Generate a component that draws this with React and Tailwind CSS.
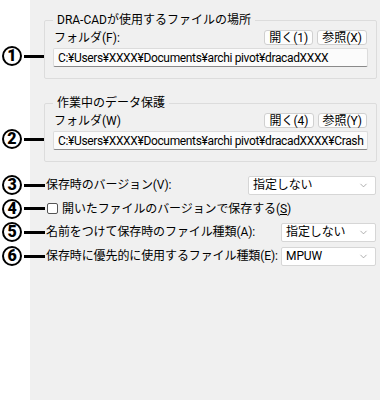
import React from 'react';
import { ChevronDown } from 'lucide-react';

const font = { fontFamily: 'Roboto, "Noto Sans CJK JP", sans-serif' };

// circled number + leader line
const Callout = ({ n }) => (
  <div className="flex items-center shrink-0 pl-[2px]">
    <span className="w-[20px] h-[20px] rounded-full border-2 border-black flex items-center justify-center text-[16px] font-black leading-none text-black">
      {n}
    </span>
    <span className="ml-[2px] w-[21px] h-[3px] bg-black" />
  </div>
);

const WinButton = ({ children }) => (
  <button className="h-[15px] px-[4px] flex items-center text-[12px] leading-none bg-[#fdfdfd] border border-[#d0d0d0] rounded-[3px]">
    {children}
  </button>
);

const PathInput = ({ value }) => (
  <div className="h-[19px] mt-[3px] flex items-center pl-[4px] bg-[#fbfbfb] border border-[#dcdcdc] border-b-[#8a8a8a] rounded-[2px] overflow-hidden whitespace-nowrap tracking-[-0.35px]">
    {value}
  </div>
);

const Select = ({ value, width }) => (
  <div className={`h-[19px] ${width} flex items-center justify-between pl-[4px] pr-[6px] bg-white border border-[#d6d6d6] rounded-[2px]`}>
    <span>{value}</span>
    <ChevronDown size={11} strokeWidth={1.5} className="text-[#8a8a8a]" />
  </div>
);

const FolderGroup = ({ n, title, label, open, browse, path, className }) => (
  <div className={`flex ${className}`}>
    <div className="w-[44px] shrink-0 flex flex-col justify-end pb-[13px]">
      <Callout n={n} />
    </div>
    <fieldset className="flex-1 min-w-0 mr-[3px] border border-[#dcdcdc] rounded-[2px] px-[8px] pb-[11px]">
      <legend className="px-[4px] leading-[14px]">{title}</legend>
      <div className="flex items-end justify-between mt-[3px] pl-[1px] pr-[1px]">
        <span className="leading-[14px]">{label}</span>
        <div className="flex gap-[4px]">
          <WinButton>{open}</WinButton>
          <WinButton>{browse}</WinButton>
        </div>
      </div>
      <PathInput value={path} />
    </fieldset>
  </div>
);

export default function App() {
  return (
    <div
      className="w-[380px] h-[400px] text-[12px] leading-[14px] text-black bg-[linear-gradient(to_right,#ffffff_30px,#f0f0f0_30px)] pt-[13px]"
      style={font}
    >
      <FolderGroup
        n="1"
        title="DRA-CADが使用するファイルの場所"
        label="フォルダ(F):"
        open="開く(1)"
        browse="参照(X)"
        path="C:¥Users¥XXXX¥Documents¥archi pivot¥dracadXXXX"
      />
      <FolderGroup
        n="2"
        className="mt-[17px]"
        title="作業中のデータ保護"
        label="フォルダ(W)"
        open="開く(4)"
        browse="参照(Y)"
        path="C:¥Users¥XXXX¥Documents¥archi pivot¥dracadXXXX¥Crash"
      />

      <div className="flex flex-col gap-[4px] mt-[13px] pr-[4px] tracking-[-0.1px]">
        <div className="flex items-center">
          <Callout n="3" />
          <span className="ml-[1px]">保存時のバージョン(V):</span>
          <div className="ml-auto">
            <Select value="指定しない" width="w-[128px]" />
          </div>
        </div>
        <div className="flex items-center h-[19px]">
          <Callout n="4" />
          <span className="ml-[2px] w-[11px] h-[11px] border border-[#555] rounded-[2px] bg-white" />
          <span className="ml-[4px]">
            開いたファイルのバージョンで保存する(<span className="underline">S</span>)
          </span>
        </div>
        <div className="flex items-center">
          <Callout n="5" />
          <span className="ml-[1px]">名前をつけて保存時のファイル種類(A):</span>
          <div className="ml-auto">
            <Select value="指定しない" width="w-[95px]" />
          </div>
        </div>
        <div className="flex items-center">
          <Callout n="6" />
          <span className="ml-[1px]">保存時に優先的に使用するファイル種類(E):</span>
          <div className="ml-auto">
            <Select value="MPUW" width="w-[95px]" />
          </div>
        </div>
      </div>
    </div>
  );
}
